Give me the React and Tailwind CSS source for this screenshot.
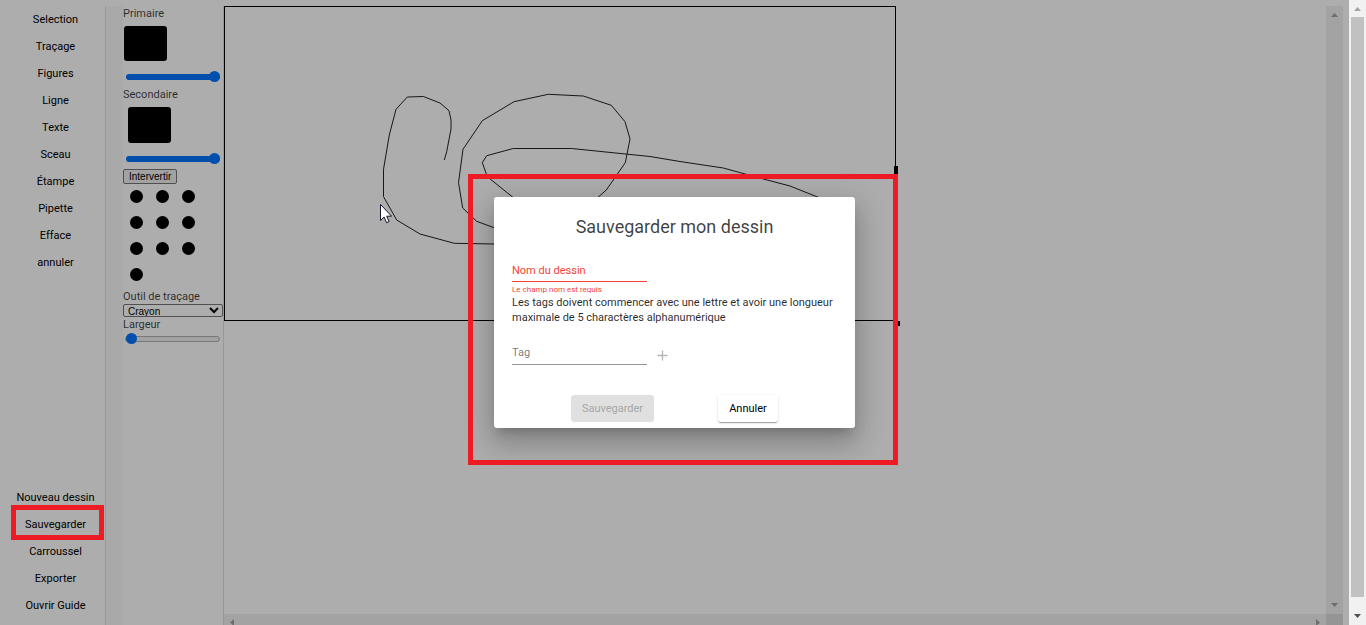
import React from "react";

const tools = ["Selection", "Traçage", "Figures", "Ligne", "Texte", "Sceau", "Étampe", "Pipette", "Efface", "annuler"];
const actions = ["Nouveau dessin", "Sauvegarder", "Carroussel", "Exporter", "Ouvrir Guide"];
const recentColors = Array.from({ length: 10 }, (_, i) => i + 1);

const sliderBase =
  "block h-[11px] cursor-pointer appearance-none bg-transparent [&::-webkit-slider-runnable-track]:h-[6px] [&::-webkit-slider-runnable-track]:rounded-full [&::-webkit-slider-thumb]:appearance-none [&::-webkit-slider-thumb]:size-[11px] [&::-webkit-slider-thumb]:rounded-full [&::-webkit-slider-thumb]:bg-[#0075ff]";
const filledTrack =
  "mx-[3px] [&::-webkit-slider-runnable-track]:bg-[#0075ff] [&::-webkit-slider-thumb]:mt-[-3px]";
const emptyTrack =
  "mr-[3px] ml-[2px] [&::-webkit-slider-runnable-track]:border [&::-webkit-slider-runnable-track]:border-[#b2b2b2] [&::-webkit-slider-runnable-track]:bg-[#efefef] [&::-webkit-slider-thumb]:mt-[-4px]";

function NavButton({ label }) {
  return (
    <button type="button" className="relative h-[27px] w-full pt-[2px] text-center text-black">
      {label}
      {label === "Sauvegarder" && (
        <span className="absolute -top-[6px] right-px -bottom-[2px] left-[5px] z-20 border-[5px] border-[#ed1c24]" />
      )}
    </button>
  );
}

function Arrow({ dir, className }) {
  const points = {
    up: "0,4 3.5,0 7,4",
    down: "0,0 7,0 3.5,4",
    left: "4,0 4,7 0,3.5",
    right: "0,0 4,3.5 0,7",
  }[dir];
  const size = dir === "up" || dir === "down" ? "h-[4px] w-[7px]" : "h-[7px] w-[4px]";
  return (
    <svg className={`${size} ${className || ""}`} fill="currentColor" aria-hidden="true">
      <polygon points={points} />
    </svg>
  );
}

function Attributes() {
  return (
    <aside className="flex w-[118px] shrink-0 flex-col border-r border-[#e0e0e0] bg-[#fafafa] pl-[17px] leading-[15px] text-black/75">
      <div className="flex flex-1 flex-col bg-white">
        <span>Primaire</span>
        <button type="button" aria-label="Couleur primaire" className="mt-[5px] ml-px h-[35px] w-[43px] rounded-[3px] bg-black" />
        <input type="range" aria-label="Opacité primaire" defaultValue="100" className={`${sliderBase} ${filledTrack} mt-[10px]`} />
        <span className="mt-[5px]">Secondaire</span>
        <button type="button" aria-label="Couleur secondaire" className="mt-[5px] ml-[5px] h-[36px] w-[43px] rounded-[3px] bg-black" />
        <input type="range" aria-label="Opacité secondaire" defaultValue="100" className={`${sliderBase} ${filledTrack} mt-[10px]`} />
        <button
          type="button"
          className="mt-[5px] h-[15px] self-start rounded-[2px] border border-[#767676] bg-[#efefef] px-[5px] font-['Liberation_Sans',sans-serif] text-[10px] leading-[13px] text-black"
        >
          Intervertir
        </button>
        <div className="mt-[6px] ml-[7px] grid grid-cols-[13px_13px_13px] gap-[13px]">
          {recentColors.map((n) => (
            <button key={n} type="button" aria-label={`Couleur récente ${n}`} className="size-[13px] rounded-full bg-black" />
          ))}
        </div>
        <label htmlFor="outil" className="mt-[8px]">Outil de traçage</label>
        <select
          id="outil"
          className="h-[13px] w-full rounded-[2px] border border-[#767676] bg-white font-['Liberation_Sans',sans-serif] text-[10px] leading-[11px] text-black"
        >
          <option>Crayon</option>
        </select>
        <label htmlFor="largeur">Largeur</label>
        <input id="largeur" type="range" defaultValue="0" className={`${sliderBase} ${emptyTrack} mt-px`} />
      </div>
    </aside>
  );
}

function Drawing() {
  return (
    <div className="relative h-[315px] w-[672px] border border-black">
      <svg className="block size-full" viewBox="225 7 670 313" fill="none" stroke="#222" strokeWidth="1">
        <polyline points="444.3,160 446.7,151.7 451,129 451,120 449,110.7 440,103 423.3,96.5 407.3,97 396,109.3 389.3,135 383.5,169.3 383.5,196.7 396.7,220 420,234 454.3,243.3 494,244" />
        <polyline points="497,228.7 494,227.7 476.7,221.3 462.7,208 458.5,182.7 463,149.3 482.3,120.7 514,101.7 548.3,94.3 583.3,96 611.3,105.3 625,121.7 630,139 625.3,162.7 606.3,190 596,199" />
        <polyline points="515,199 487.3,176.7 482.3,162.7 486.7,155.7 513.3,148.5 571.7,148.5 650,156.5 680,161.5 723.3,168 763.3,179 790,186 820,198" />
      </svg>
      <span className="absolute top-[159px] -right-[3px] h-[8px] w-[4px] bg-black" />
      <span className="absolute -right-[5px] -bottom-[6px] h-[5px] w-[4px] bg-black" />
      <svg className="absolute top-[197px] left-[155px] z-20 h-[20px] w-[12px]" viewBox="0 0 12 20" aria-hidden="true">
        <path d="M.5.5v16l3.6-3.5 2.5 5.7 2.5-1.1-2.4-5.4h4.9z" fill="#fff" stroke="#15152a" strokeWidth="1" />
      </svg>
    </div>
  );
}

function SaveDialog() {
  return (
    <div className="absolute inset-0 z-10 flex items-center justify-center bg-black/32">
      <form
        role="dialog"
        aria-labelledby="titre"
        className="relative w-[361px] rounded-[3px] bg-white px-[18px] pt-[18px] pb-[6px] text-black/85 shadow-[0_7px_10px_-5px_rgba(0,0,0,0.2),0_16px_25px_2px_rgba(0,0,0,0.14),0_6px_31px_5px_rgba(0,0,0,0.12)]"
      >
        <h1 id="titre" className="text-center text-[18px] leading-[24px] text-black/75">Sauvegarder mon dessin</h1>
        <input
          type="text"
          aria-label="Nom du dessin"
          placeholder="Nom du dessin"
          className="mt-[23px] block h-[20px] w-[135px] border-b border-[#f44336] pb-[2px] placeholder:text-[#f44336]"
        />
        <p className="mt-[2px] text-[8px] leading-[11px] text-[#f44336]">Le champ nom est requis</p>
        <p className="leading-[15px]">
          Les tags doivent commencer avec une lettre et avoir une longueur maximale de 5 charactères alphanumérique
        </p>
        <div className="mt-[20px] flex items-center gap-[10px]">
          <input
            type="text"
            aria-label="Tag"
            placeholder="Tag"
            className="block h-[20px] w-[135px] border-b border-[#949494] pb-[4px] placeholder:text-black/55"
          />
          <button type="button" aria-label="Ajouter" disabled className="text-[#b4b4b4]">
            <svg className="size-[11px]" viewBox="0 0 11 11" fill="none" stroke="currentColor" strokeWidth="1.3">
              <path d="M5.5.5v10M.5 5.5h10" />
            </svg>
          </button>
        </div>
        <div className="mt-[30px] flex gap-[64px] pl-[59px]">
          <button type="button" disabled className="h-[27px] w-[83px] rounded-[3px] bg-[#e0e0e0] pt-[2px] text-[#a6a6a6]">
            Sauvegarder
          </button>
          <button
            type="button"
            className="h-[27px] w-[60px] rounded-[3px] bg-white pt-[2px] text-black shadow-[0_2px_1px_-1px_rgba(0,0,0,0.2),0_1px_1px_0_rgba(0,0,0,0.14),0_1px_3px_0_rgba(0,0,0,0.12)]"
          >
            Annuler
          </button>
        </div>
        <span className="pointer-events-none absolute -top-[23px] -right-[43px] -bottom-[37px] -left-[26px] border-[5px] border-[#ed1c24]" />
      </form>
    </div>
  );
}

export default function App() {
  return (
    <div className="flex h-screen overflow-hidden bg-white font-[Roboto,sans-serif] text-[11px]">
      <div className="relative flex min-w-0 flex-1 pt-[6px] pr-[6px]">
        <nav className="flex w-[106px] shrink-0 flex-col border-r border-[#e0e0e0] pb-[6px] pl-[6px]">
          {tools.map((t) => <NavButton key={t} label={t} />)}
          <div className="mt-auto">
            {actions.map((a) => <NavButton key={a} label={a} />)}
          </div>
        </nav>
        <Attributes />
        <main className="grid min-w-0 flex-1 grid-cols-[1fr_17px] grid-rows-[1fr_11px]">
          <div className="min-w-0"><Drawing /></div>
          <div className="flex flex-col items-center justify-between bg-[#f1f1f1] py-[7px] text-[#a3a3a3]">
            <Arrow dir="up" />
            <Arrow dir="down" />
          </div>
          <div className="flex items-start justify-between bg-[#f1f1f1] px-[6px] pt-[5px] text-[#a3a3a3]">
            <Arrow dir="left" />
            <Arrow dir="right" />
          </div>
          <div className="bg-[#dcdcdc]" />
        </main>
        <SaveDialog />
      </div>
      <div className="flex w-[17px] shrink-0 flex-col items-center bg-[#f1f1f1] py-[7px]">
        <Arrow dir="up" className="text-[#a3a3a3]" />
        <div className="mt-[6px] mb-[17px] w-[13px] flex-1 bg-[#c1c1c1]" />
        <Arrow dir="down" className="text-[#505050]" />
      </div>
    </div>
  );
}
